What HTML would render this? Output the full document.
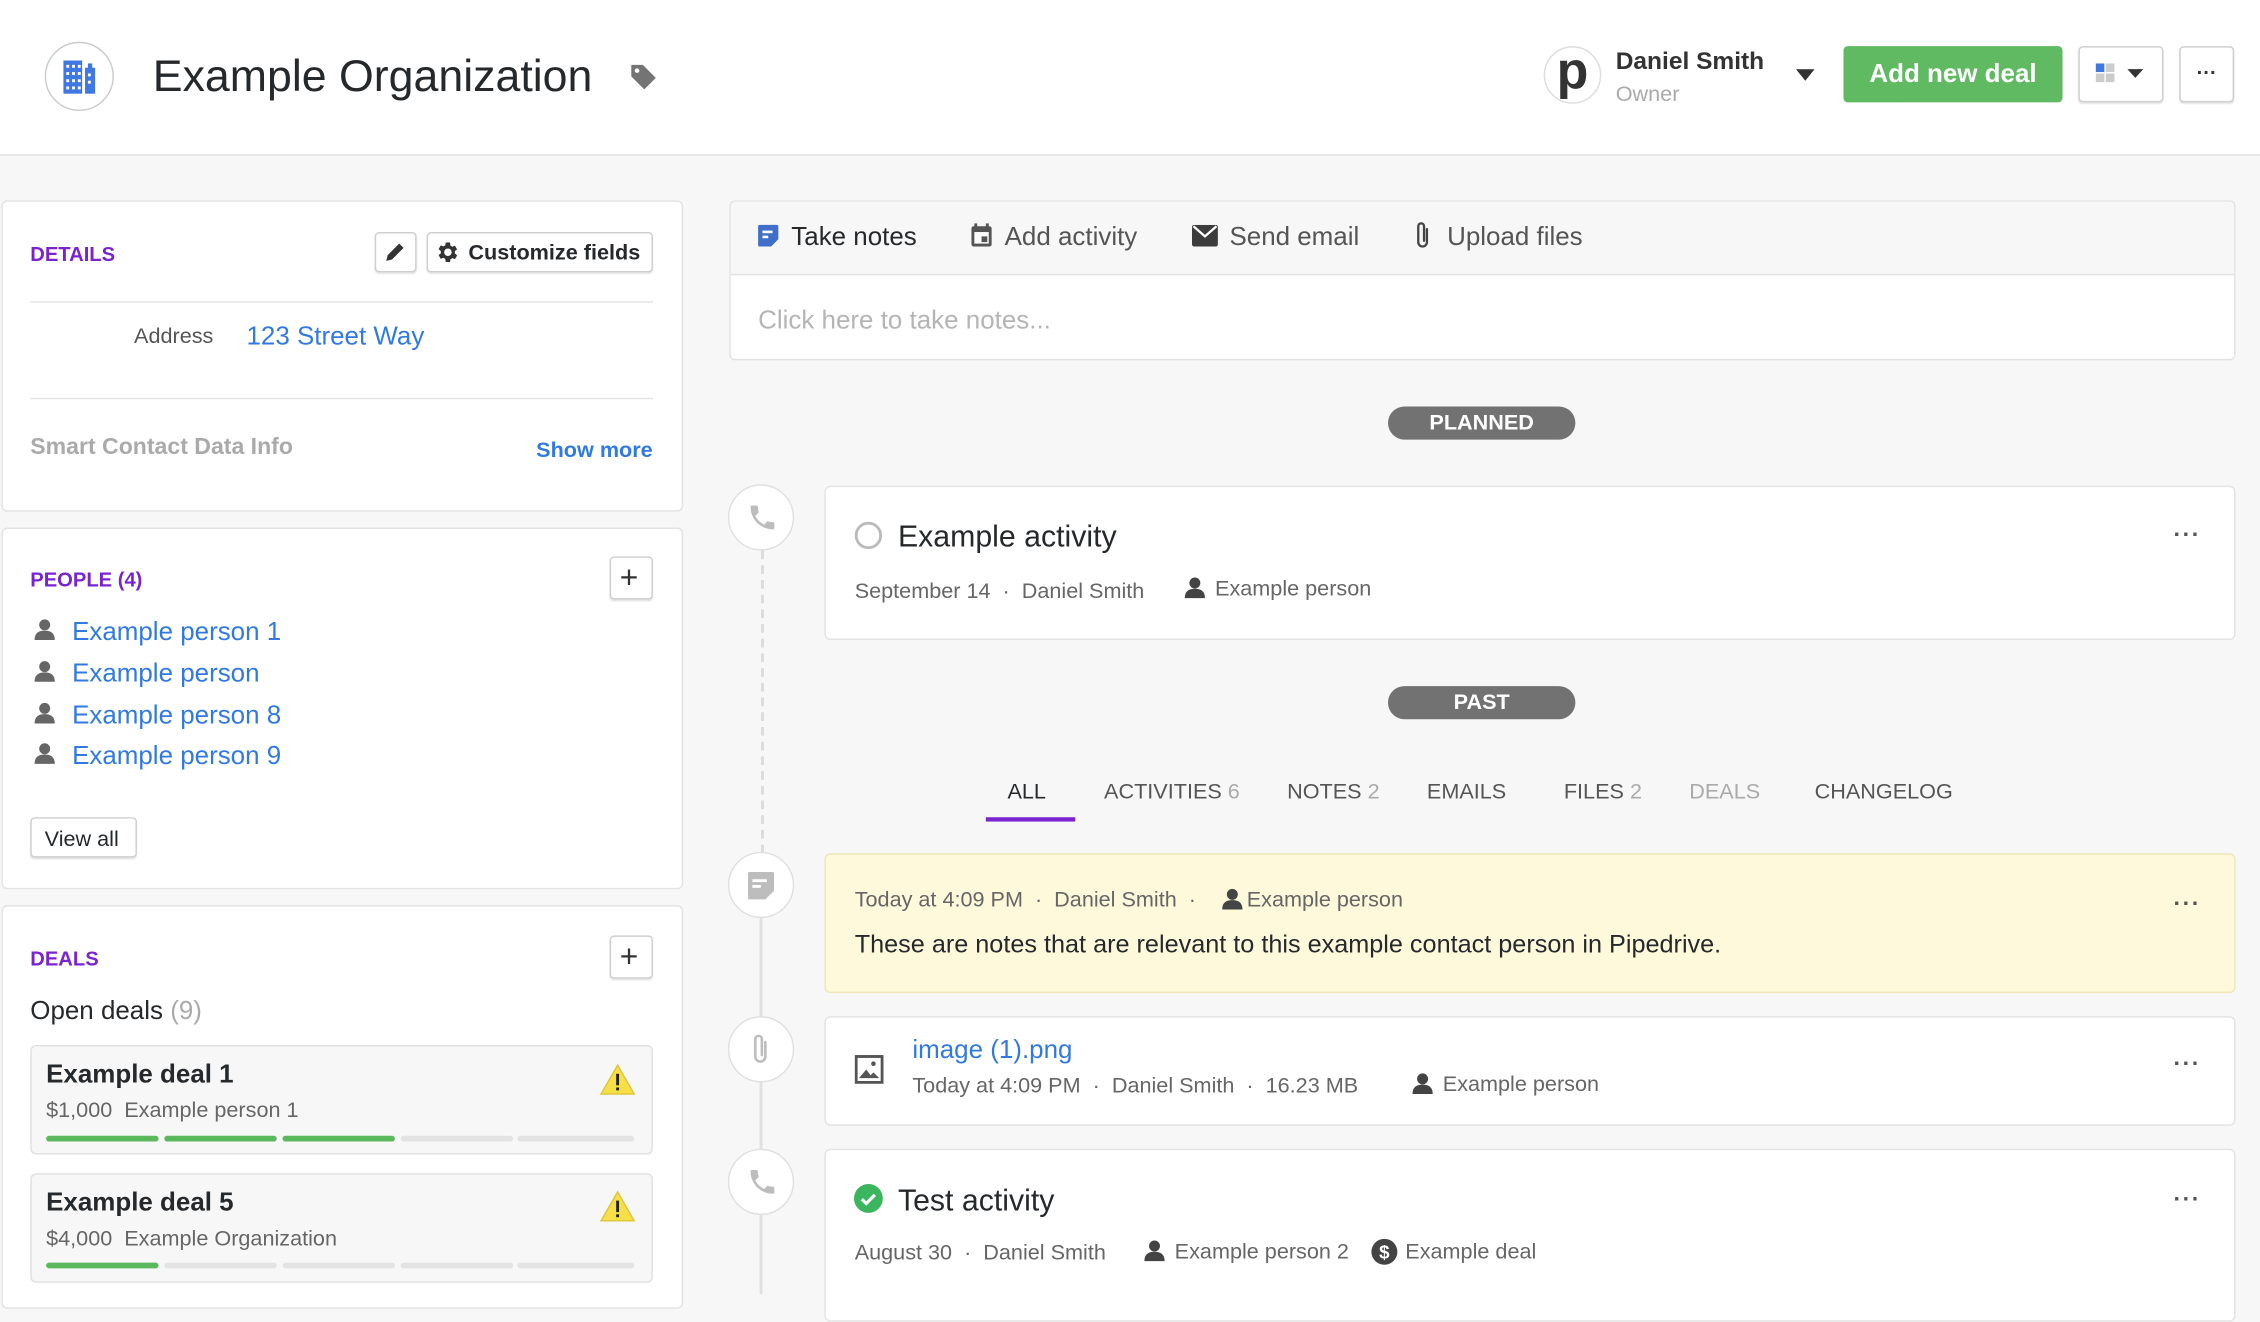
<!DOCTYPE html>
<html><head><meta charset="utf-8">
<style>
html,body{margin:0;padding:0;width:2260px;height:1294px;overflow:hidden;background:#f7f7f7}
#r{position:absolute;left:0;top:0;width:1568px;height:898px;transform:scale(1.44133);transform-origin:0 0;font-family:"Liberation Sans",sans-serif;color:#26292c;background:#f7f7f7}
.a{position:absolute}
.t{position:absolute;white-space:nowrap;line-height:1}
.card{position:absolute;background:#fff;border:1px solid #e3e3e3;border-radius:4px;box-sizing:border-box}
.btn{position:absolute;background:#fff;border:1px solid #cfcfcf;border-radius:3px;box-sizing:border-box;box-shadow:0 1px 1px rgba(0,0,0,.1)}
.h{color:#7a24d0;font-size:14px;font-weight:bold}
.blue{color:#317ae2}
.gray{color:#6b6b6b}
.pill{position:absolute;background:#727272;color:#fff;font-size:15px;font-weight:bold;text-align:center;border-radius:12px;height:23px;line-height:23px;width:130px;left:963px}
.tl{position:absolute;left:505px;width:46px;height:46px;border-radius:50%;background:#fff;border:1px solid #e0e0e0;box-sizing:border-box}
.dots{position:absolute;left:1508px;font-size:16px;color:#555;font-weight:bold;letter-spacing:1px}
.tab{position:absolute;top:542px;font-size:15px;color:#555;white-space:nowrap;line-height:1}
.tab span{color:#aaa}
.seg{position:absolute;height:4px;border-radius:2px;width:78px}
</style></head><body><div id="r">
<div class="a" style="left:0;top:0;width:1568px;height:107px;background:#fff;border-bottom:1px solid #e0e0e0"></div>
<div class="a" style="left:31px;top:29px;width:48px;height:48px;border-radius:50%;border:1px solid #ccc;box-sizing:border-box;background:#fff"></div>
<svg class="a" style="left:43px;top:40px" width="24" height="26" viewBox="0 0 24 26"><rect x="1" y="2" width="13" height="23" fill="#3f78e0"/><rect x="16" y="7" width="7" height="18" fill="#3f78e0"/><rect x="18" y="4" width="3" height="4" fill="#3f78e0"/><g fill="#fff"><rect x="3" y="5" width="2" height="2"/><rect x="7" y="5" width="2" height="2"/><rect x="11" y="5" width="2" height="2"/><rect x="3" y="10" width="2" height="2"/><rect x="7" y="10" width="2" height="2"/><rect x="11" y="10" width="2" height="2"/><rect x="3" y="15" width="2" height="2"/><rect x="7" y="15" width="2" height="2"/><rect x="11" y="15" width="2" height="2"/><rect x="3" y="20" width="2" height="2"/><rect x="7" y="20" width="2" height="2"/><rect x="11" y="20" width="2" height="2"/><rect x="18" y="11" width="2" height="2"/><rect x="18" y="16" width="2" height="2"/></g></svg>
<div class="t" style="left:106px;top:37px;font-size:31px;color:#26292c">Example Organization</div>
<svg class="a" style="left:436px;top:43px" width="20" height="20" viewBox="0 0 20 20"><path d="M2 2h8l9 9-8 8-9-9z" fill="#747474"/><circle cx="6" cy="6" r="1.6" fill="#fff"/></svg>
<div class="a" style="left:1071px;top:32px;width:40px;height:40px;border-radius:50%;border:1px solid #ddd;box-sizing:border-box;background:#fff;overflow:hidden"><div class="t" style="left:8px;top:-2px;font-size:36px;font-weight:bold;color:#333">p</div></div>
<div class="t" style="left:1121px;top:34px;font-size:17px;font-weight:bold;color:#333">Daniel Smith</div>
<div class="t" style="left:1121px;top:58px;font-size:15px;color:#aaa">Owner</div>
<svg class="a" style="left:1246px;top:48px" width="14" height="9"><path d="M0 0h13l-6.5 8z" fill="#333"/></svg>
<div class="a" style="left:1279px;top:32px;width:152px;height:39px;background:#5fba62;border-radius:3px;color:#fff;font-size:18px;font-weight:bold;text-align:center;line-height:39px">Add new deal</div>
<div class="btn" style="left:1442px;top:32px;width:59px;height:39px"></div>
<svg class="a" style="left:1454px;top:44px" width="36" height="16"><rect x="0" y="0" width="6" height="6" fill="#3f78e0"/><rect x="7" y="0" width="6" height="6" fill="#ccc"/><rect x="0" y="7" width="6" height="6" fill="#ccc"/><rect x="7" y="7" width="6" height="6" fill="#ccc"/><path d="M22 4h11l-5.5 6z" fill="#333"/></svg>
<div class="btn" style="left:1512px;top:32px;width:38px;height:39px"></div>
<div class="t" style="left:1524px;top:43px;font-size:14px;font-weight:bold;color:#333">···</div>

<div class="card" style="left:1px;top:139px;width:473px;height:216px"></div>
<div class="t h" style="left:21px;top:169px">DETAILS</div>
<div class="btn" style="left:260px;top:161px;width:29px;height:28px"></div>
<svg class="a" style="left:266px;top:167px" width="16" height="16"><path d="M2 14l1-4 8-8 3 3-8 8z" fill="#333"/></svg>
<div class="btn" style="left:296px;top:161px;width:157px;height:28px"></div>
<svg class="a" style="left:301px;top:166px" width="18" height="18" viewBox="0 0 24 24"><path fill="#333" d="M19.4 13a7.5 7.5 0 0 0 0-2l2.1-1.6-2-3.5-2.5 1a7 7 0 0 0-1.7-1L15 3h-4l-.4 2.6a7 7 0 0 0-1.7 1l-2.5-1-2 3.5L6.5 11a7.5 7.5 0 0 0 0 2l-2.1 1.6 2 3.5 2.5-1a7 7 0 0 0 1.7 1L11 21h4l.4-2.6a7 7 0 0 0 1.7-1l2.5 1 2-3.5zM13 15.5a3.5 3.5 0 1 1 0-7 3.5 3.5 0 0 1 0 7z"/></svg>
<div class="t" style="left:325px;top:168px;font-size:15px;font-weight:bold;color:#26292c">Customize fields</div>
<div class="a" style="left:21px;top:209px;width:432px;height:1px;background:#e3e3e3"></div>
<div class="t" style="left:93px;top:226px;font-size:15px;color:#555">Address</div>
<div class="t blue" style="left:171px;top:224px;font-size:18px">123 Street Way</div>
<div class="a" style="left:21px;top:276px;width:432px;height:1px;background:#e3e3e3"></div>
<div class="t" style="left:21px;top:303px;font-size:16px;font-weight:bold;color:#aaa">Smart Contact Data Info</div>
<div class="t blue" style="left:372px;top:305px;font-size:15px;font-weight:bold">Show more</div>

<div class="card" style="left:1px;top:366px;width:473px;height:251px"></div>
<div class="t h" style="left:21px;top:395px">PEOPLE (4)</div>
<div class="btn" style="left:423px;top:386px;width:30px;height:30px"></div>
<div class="t" style="left:430px;top:390px;font-size:22px;color:#333">+</div>
<svg class="a" style="left:23px;top:429px" width="16" height="16"><circle cx="8" cy="4.5" r="3.8" fill="#666"/><path d="M1 15c0-5 3-6.5 7-6.5s7 1.5 7 6.5z" fill="#666"/></svg>
<div class="t blue" style="left:50px;top:429px;font-size:18px">Example person 1</div>
<svg class="a" style="left:23px;top:458px" width="16" height="16"><circle cx="8" cy="4.5" r="3.8" fill="#666"/><path d="M1 15c0-5 3-6.5 7-6.5s7 1.5 7 6.5z" fill="#666"/></svg>
<div class="t blue" style="left:50px;top:458px;font-size:18px">Example person</div>
<svg class="a" style="left:23px;top:487px" width="16" height="16"><circle cx="8" cy="4.5" r="3.8" fill="#666"/><path d="M1 15c0-5 3-6.5 7-6.5s7 1.5 7 6.5z" fill="#666"/></svg>
<div class="t blue" style="left:50px;top:487px;font-size:18px">Example person 8</div>
<svg class="a" style="left:23px;top:515px" width="16" height="16"><circle cx="8" cy="4.5" r="3.8" fill="#666"/><path d="M1 15c0-5 3-6.5 7-6.5s7 1.5 7 6.5z" fill="#666"/></svg>
<div class="t blue" style="left:50px;top:515px;font-size:18px">Example person 9</div>
<div class="btn" style="left:21px;top:567px;width:74px;height:28px"></div>
<div class="t" style="left:31px;top:575px;font-size:15px;color:#26292c">View all</div>

<div class="card" style="left:1px;top:628px;width:473px;height:280px"></div>
<div class="t h" style="left:21px;top:658px">DEALS</div>
<div class="btn" style="left:423px;top:649px;width:30px;height:30px"></div>
<div class="t" style="left:430px;top:653px;font-size:22px;color:#333">+</div>
<div class="t" style="left:21px;top:692px;font-size:18px;color:#26292c">Open deals <span style="color:#aaa">(9)</span></div>
<div class="a" style="left:21px;top:725px;width:432px;height:76px;background:#f7f7f7;border:1px solid #e0e0e0;border-radius:4px;box-sizing:border-box"></div>
<div class="t" style="left:32px;top:736px;font-size:18px;font-weight:bold">Example deal 1</div>
<div class="t" style="left:32px;top:763px;font-size:15px;color:#666">$1,000&nbsp; Example person 1</div>
<svg class="a" style="left:416px;top:738px" width="25" height="22"><path d="M12.5 1L24 21H1z" fill="#f6e047" stroke="#e0c53a"/><rect x="11.5" y="7" width="2" height="8" fill="#222"/><rect x="11.5" y="16.5" width="2" height="2" fill="#222"/></svg>
<div class="seg" style="left:32px;top:788px;background:#5cb85c"></div><div class="seg" style="left:114px;top:788px;background:#5cb85c"></div><div class="seg" style="left:196px;top:788px;background:#5cb85c"></div><div class="seg" style="left:278px;top:788px;background:#e3e3e3"></div><div class="seg" style="left:359px;top:788px;width:81px;background:#e3e3e3"></div>
<div class="a" style="left:21px;top:814px;width:432px;height:76px;background:#f7f7f7;border:1px solid #e0e0e0;border-radius:4px;box-sizing:border-box"></div>
<div class="t" style="left:32px;top:825px;font-size:18px;font-weight:bold">Example deal 5</div>
<div class="t" style="left:32px;top:852px;font-size:15px;color:#666">$4,000&nbsp; Example Organization</div>
<svg class="a" style="left:416px;top:826px" width="25" height="22"><path d="M12.5 1L24 21H1z" fill="#f6e047" stroke="#e0c53a"/><rect x="11.5" y="7" width="2" height="8" fill="#222"/><rect x="11.5" y="16.5" width="2" height="2" fill="#222"/></svg>
<div class="seg" style="left:32px;top:876px;background:#5cb85c"></div><div class="seg" style="left:114px;top:876px;background:#e3e3e3"></div><div class="seg" style="left:196px;top:876px;background:#e3e3e3"></div><div class="seg" style="left:278px;top:876px;background:#e3e3e3"></div><div class="seg" style="left:359px;top:876px;width:81px;background:#e3e3e3"></div>

<div class="card" style="left:506px;top:139px;width:1045px;height:111px;background:#fff;overflow:hidden"><div class="a" style="left:0;top:0;width:100%;height:50px;background:#f7f7f7;border-bottom:1px solid #e3e3e3"></div></div>
<svg class="a" style="left:525px;top:155px" width="16" height="17"><path d="M1 2a1 1 0 0 1 1-1h12a1 1 0 0 1 1 1v9l-5 5H2a1 1 0 0 1-1-1z" fill="#3f6fc8"/><rect x="4" y="5" width="7" height="1.8" fill="#fff"/><rect x="4" y="8.5" width="4" height="1.8" fill="#fff"/></svg>
<div class="t" style="left:549px;top:155px;font-size:18px;color:#26292c">Take notes</div>
<svg class="a" style="left:673px;top:154px" width="16" height="18"><rect x="1" y="3" width="14" height="14" rx="1.5" fill="#555"/><rect x="3" y="1" width="2" height="4" fill="#555"/><rect x="11" y="1" width="2" height="4" fill="#555"/><rect x="3" y="7" width="10" height="8" fill="#fff"/><rect x="8" y="10" width="4" height="4" fill="#555"/></svg>
<div class="t" style="left:697px;top:155px;font-size:18px;color:#555">Add activity</div>
<svg class="a" style="left:827px;top:156px" width="18" height="15"><rect x="0" y="0" width="18" height="15" rx="1.5" fill="#3c3c3c"/><path d="M1 1l8 7 8-7" fill="none" stroke="#fff" stroke-width="1.6"/></svg>
<div class="t" style="left:853px;top:155px;font-size:18px;color:#555">Send email</div>
<svg class="a" style="left:981px;top:153px" width="13" height="20"><path d="M9 6v9a3 3 0 0 1-6 0V4a2 2 0 0 1 4 0v10" fill="none" stroke="#444" stroke-width="1.6" stroke-linecap="round"/></svg>
<div class="t" style="left:1004px;top:155px;font-size:18px;color:#555">Upload files</div>
<div class="t" style="left:526px;top:213px;font-size:18px;color:#b5b5b5">Click here to take notes...</div>

<div class="a" style="left:528px;top:382px;width:0;height:210px;border-left:2px dashed #dcdcdc"></div>
<div class="a" style="left:527px;top:636px;width:2px;height:262px;background:#e0e0e0"></div>

<div class="pill" style="top:282px">PLANNED</div>

<div class="tl" style="top:336px"></div>
<svg class="a" style="left:518px;top:348px" width="22" height="22" viewBox="0 0 24 24"><path fill="#bdbdbd" d="M6.6 10.8c1.4 2.8 3.8 5.1 6.6 6.6l2.2-2.2c.3-.3.7-.4 1-.2 1.1.4 2.3.6 3.6.6.6 0 1 .4 1 1V20c0 .6-.4 1-1 1C10.6 21 3 13.4 3 4c0-.6.4-1 1-1h3.5c.6 0 1 .4 1 1 0 1.3.2 2.5.6 3.6.1.3 0 .7-.2 1z"/></svg>
<div class="card" style="left:572px;top:337px;width:979px;height:107px"></div>
<div class="a" style="left:593px;top:362px;width:19px;height:19px;border-radius:50%;border:2px solid #bbb;box-sizing:border-box"></div>
<div class="t" style="left:623px;top:362px;font-size:21px;color:#26292c">Example activity</div>
<div class="t" style="left:593px;top:403px;font-size:15px;color:#666">September 14 &nbsp;· &nbsp;Daniel Smith</div>
<svg class="a" style="left:821px;top:400px" width="16" height="16"><circle cx="8" cy="4.5" r="3.8" fill="#444"/><path d="M1 15c0-5 3-6.5 7-6.5s7 1.5 7 6.5z" fill="#444"/></svg>
<div class="t" style="left:843px;top:401px;font-size:15px;color:#666">Example person</div>
<div class="dots" style="top:363px">···</div>

<div class="pill" style="top:476px">PAST</div>

<div class="tab" style="left:699px;color:#26292c">ALL</div>
<div class="a" style="left:684px;top:567px;width:62px;height:3px;background:#7a24d0"></div>
<div class="tab" style="left:766px">ACTIVITIES <span>6</span></div>
<div class="tab" style="left:893px">NOTES <span>2</span></div>
<div class="tab" style="left:990px">EMAILS</div>
<div class="tab" style="left:1085px">FILES <span>2</span></div>
<div class="tab" style="left:1172px;color:#aaa">DEALS</div>
<div class="tab" style="left:1259px">CHANGELOG</div>

<div class="tl" style="top:591px"></div>
<svg class="a" style="left:518px;top:604px" width="20" height="21"><path d="M1 2a1 1 0 0 1 1-1h16a1 1 0 0 1 1 1v12l-6 6H2a1 1 0 0 1-1-1z" fill="#bdbdbd"/><rect x="4" y="6" width="10" height="2" fill="#fff"/><rect x="4" y="10" width="6" height="2" fill="#fff"/></svg>
<div class="card" style="left:572px;top:592px;width:979px;height:97px;background:#fff9dc;border-color:#eee6b8"></div>
<div class="t" style="left:593px;top:617px;font-size:15px;color:#666">Today at 4:09 PM &nbsp;· &nbsp;Daniel Smith &nbsp;·</div>
<svg class="a" style="left:847px;top:616px" width="16" height="16"><circle cx="8" cy="4.5" r="3.8" fill="#444"/><path d="M1 15c0-5 3-6.5 7-6.5s7 1.5 7 6.5z" fill="#444"/></svg>
<div class="t" style="left:865px;top:617px;font-size:15px;color:#666">Example person</div>
<div class="t" style="left:593px;top:647px;font-size:17.5px;color:#26292c">These are notes that are relevant to this example contact person in Pipedrive.</div>
<div class="dots" style="top:619px">···</div>

<div class="tl" style="top:705px"></div>
<svg class="a" style="left:520px;top:716px" width="16" height="24"><path d="M11 7v10a3.5 3.5 0 0 1-7 0V5a2.3 2.3 0 0 1 4.6 0v11" fill="none" stroke="#bdbdbd" stroke-width="1.8" stroke-linecap="round"/></svg>
<div class="card" style="left:572px;top:705px;width:979px;height:76px"></div>
<svg class="a" style="left:593px;top:732px" width="20" height="20"><rect x="1" y="1" width="18" height="18" fill="none" stroke="#555" stroke-width="2"/><path d="M3 16l5-6 3 4 2-2 4 4z" fill="#555"/><circle cx="13" cy="6" r="1.6" fill="#555"/></svg>
<div class="t blue" style="left:633px;top:719px;font-size:18px">image (1).png</div>
<div class="t" style="left:633px;top:746px;font-size:15px;color:#666">Today at 4:09 PM &nbsp;· &nbsp;Daniel Smith &nbsp;· &nbsp;16.23 MB</div>
<svg class="a" style="left:979px;top:744px" width="16" height="16"><circle cx="8" cy="4.5" r="3.8" fill="#444"/><path d="M1 15c0-5 3-6.5 7-6.5s7 1.5 7 6.5z" fill="#444"/></svg>
<div class="t" style="left:1001px;top:745px;font-size:15px;color:#666">Example person</div>
<div class="dots" style="top:730px">···</div>

<div class="tl" style="top:797px"></div>
<svg class="a" style="left:518px;top:809px" width="22" height="22" viewBox="0 0 24 24"><path fill="#bdbdbd" d="M6.6 10.8c1.4 2.8 3.8 5.1 6.6 6.6l2.2-2.2c.3-.3.7-.4 1-.2 1.1.4 2.3.6 3.6.6.6 0 1 .4 1 1V20c0 .6-.4 1-1 1C10.6 21 3 13.4 3 4c0-.6.4-1 1-1h3.5c.6 0 1 .4 1 1 0 1.3.2 2.5.6 3.6.1.3 0 .7-.2 1z"/></svg>
<div class="card" style="left:572px;top:797px;width:979px;height:120px"></div>
<svg class="a" style="left:592px;top:821px" width="21" height="21"><circle cx="10.5" cy="10.5" r="10" fill="#3cb55f"/><path d="M6 11l3 3 6-6" fill="none" stroke="#fff" stroke-width="2.2"/></svg>
<div class="t" style="left:623px;top:823px;font-size:21px;color:#26292c">Test activity</div>
<div class="t" style="left:593px;top:862px;font-size:15px;color:#666">August 30 &nbsp;· &nbsp;Daniel Smith</div>
<svg class="a" style="left:793px;top:860px" width="16" height="16"><circle cx="8" cy="4.5" r="3.8" fill="#444"/><path d="M1 15c0-5 3-6.5 7-6.5s7 1.5 7 6.5z" fill="#444"/></svg>
<div class="t" style="left:815px;top:861px;font-size:15px;color:#666">Example person 2</div>
<svg class="a" style="left:951px;top:859px" width="19" height="19"><circle cx="9.5" cy="9.5" r="9" fill="#444"/><text x="9.5" y="14" font-size="13" font-weight="bold" fill="#fff" text-anchor="middle" font-family="Liberation Sans">$</text></svg>
<div class="t" style="left:975px;top:861px;font-size:15px;color:#666">Example deal</div>
<div class="dots" style="top:824px">···</div>
</div></body></html>
